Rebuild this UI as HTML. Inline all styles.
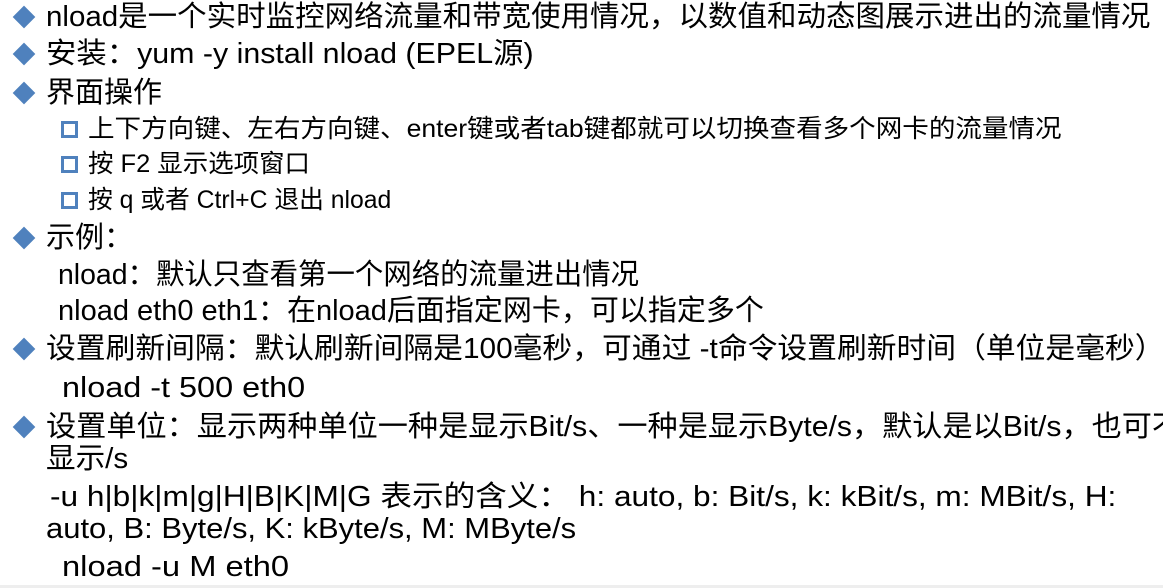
<!DOCTYPE html>
<html><head><meta charset="utf-8"><style>
body{margin:0;width:1163px;height:588px;background:#fff;position:relative;overflow:hidden;font-family:"Liberation Sans","Noto Sans CJK SC",sans-serif;color:#000}
.l{position:absolute;white-space:nowrap;font-size:29px;line-height:32px;transform-origin:0 50%}
.s{position:absolute;white-space:nowrap;font-size:25px;line-height:28px;transform-origin:0 50%}
.d{position:absolute;width:16px;height:16px;background:#4F81BD;transform:rotate(45deg)}
.q{position:absolute;width:11px;height:11px;border:3px solid #4F81BD;background:#fff}
.bar{position:absolute;left:0;top:585px;width:1163px;height:3px;background:#eee}
</style></head><body>
<div class="d" style="left:16px;top:9px"></div><div class="l" style="left:46px;top:1px;transform:scaleX(1.017)">nload是一个实时监控网络流量和带宽使用情况，以数值和动态图展示进出的流量情况</div>
<div class="d" style="left:16px;top:46px"></div><div class="l" style="left:46px;top:38px;transform:scaleX(1.047)">安装：yum -y install nload (EPEL源)</div>
<div class="d" style="left:16px;top:85px"></div><div class="l" style="left:46px;top:77px">界面操作</div>
<div class="q" style="left:61px;top:121px"></div><div class="s" style="left:88px;top:115px;transform:scaleX(1.062)">上下方向键、左右方向键、enter键或者tab键都就可以切换查看多个网卡的流量情况</div>
<div class="q" style="left:61px;top:156px"></div><div class="s" style="left:88px;top:150px;transform:scaleX(1.018)">按 F2 显示选项窗口</div>
<div class="q" style="left:61px;top:192px"></div><div class="s" style="left:88px;top:186px;transform:scaleX(0.99)">按 q 或者 Ctrl+C 退出 nload</div>
<div class="d" style="left:16px;top:230px"></div><div class="l" style="left:46px;top:222px">示例：</div>
<div class="l" style="left:58px;top:259px;transform:scaleX(0.98)">nload：默认只查看第一个网络的流量进出情况</div>
<div class="l" style="left:58px;top:295px">nload eth0 eth1：在nload后面指定网卡，可以指定多个</div>
<div class="d" style="left:16px;top:341px"></div><div class="l" style="left:46px;top:333px;transform:scaleX(1.027)">设置刷新间隔：默认刷新间隔是100毫秒，可通过 -t命令设置刷新时间（单位是毫秒）</div>
<div class="l" style="left:62px;top:372px;transform:scaleX(1.117)">nload -t 500 eth0</div>
<div class="d" style="left:16px;top:419px"></div><div class="l" style="left:46px;top:411px;transform:scaleX(1.04)">设置单位：显示两种单位一种是显示Bit/s、一种是显示Byte/s，默认是以Bit/s，也可不</div>
<div class="l" style="left:46px;top:443px;transform:scaleX(1.02)">显示/s</div>
<div class="l" style="left:50px;top:481px;transform:scaleX(1.09)">-u h|b|k|m|g|H|B|K|M|G 表示的含义： h: auto, b: Bit/s, k: kBit/s, m: MBit/s, H:</div>
<div class="l" style="left:46px;top:513px;transform:scaleX(1.068)">auto, B: Byte/s, K: kByte/s, M: MByte/s</div>
<div class="l" style="left:62px;top:551px;transform:scaleX(1.127)">nload -u M eth0</div>
<div class="bar"></div>
</body></html>
